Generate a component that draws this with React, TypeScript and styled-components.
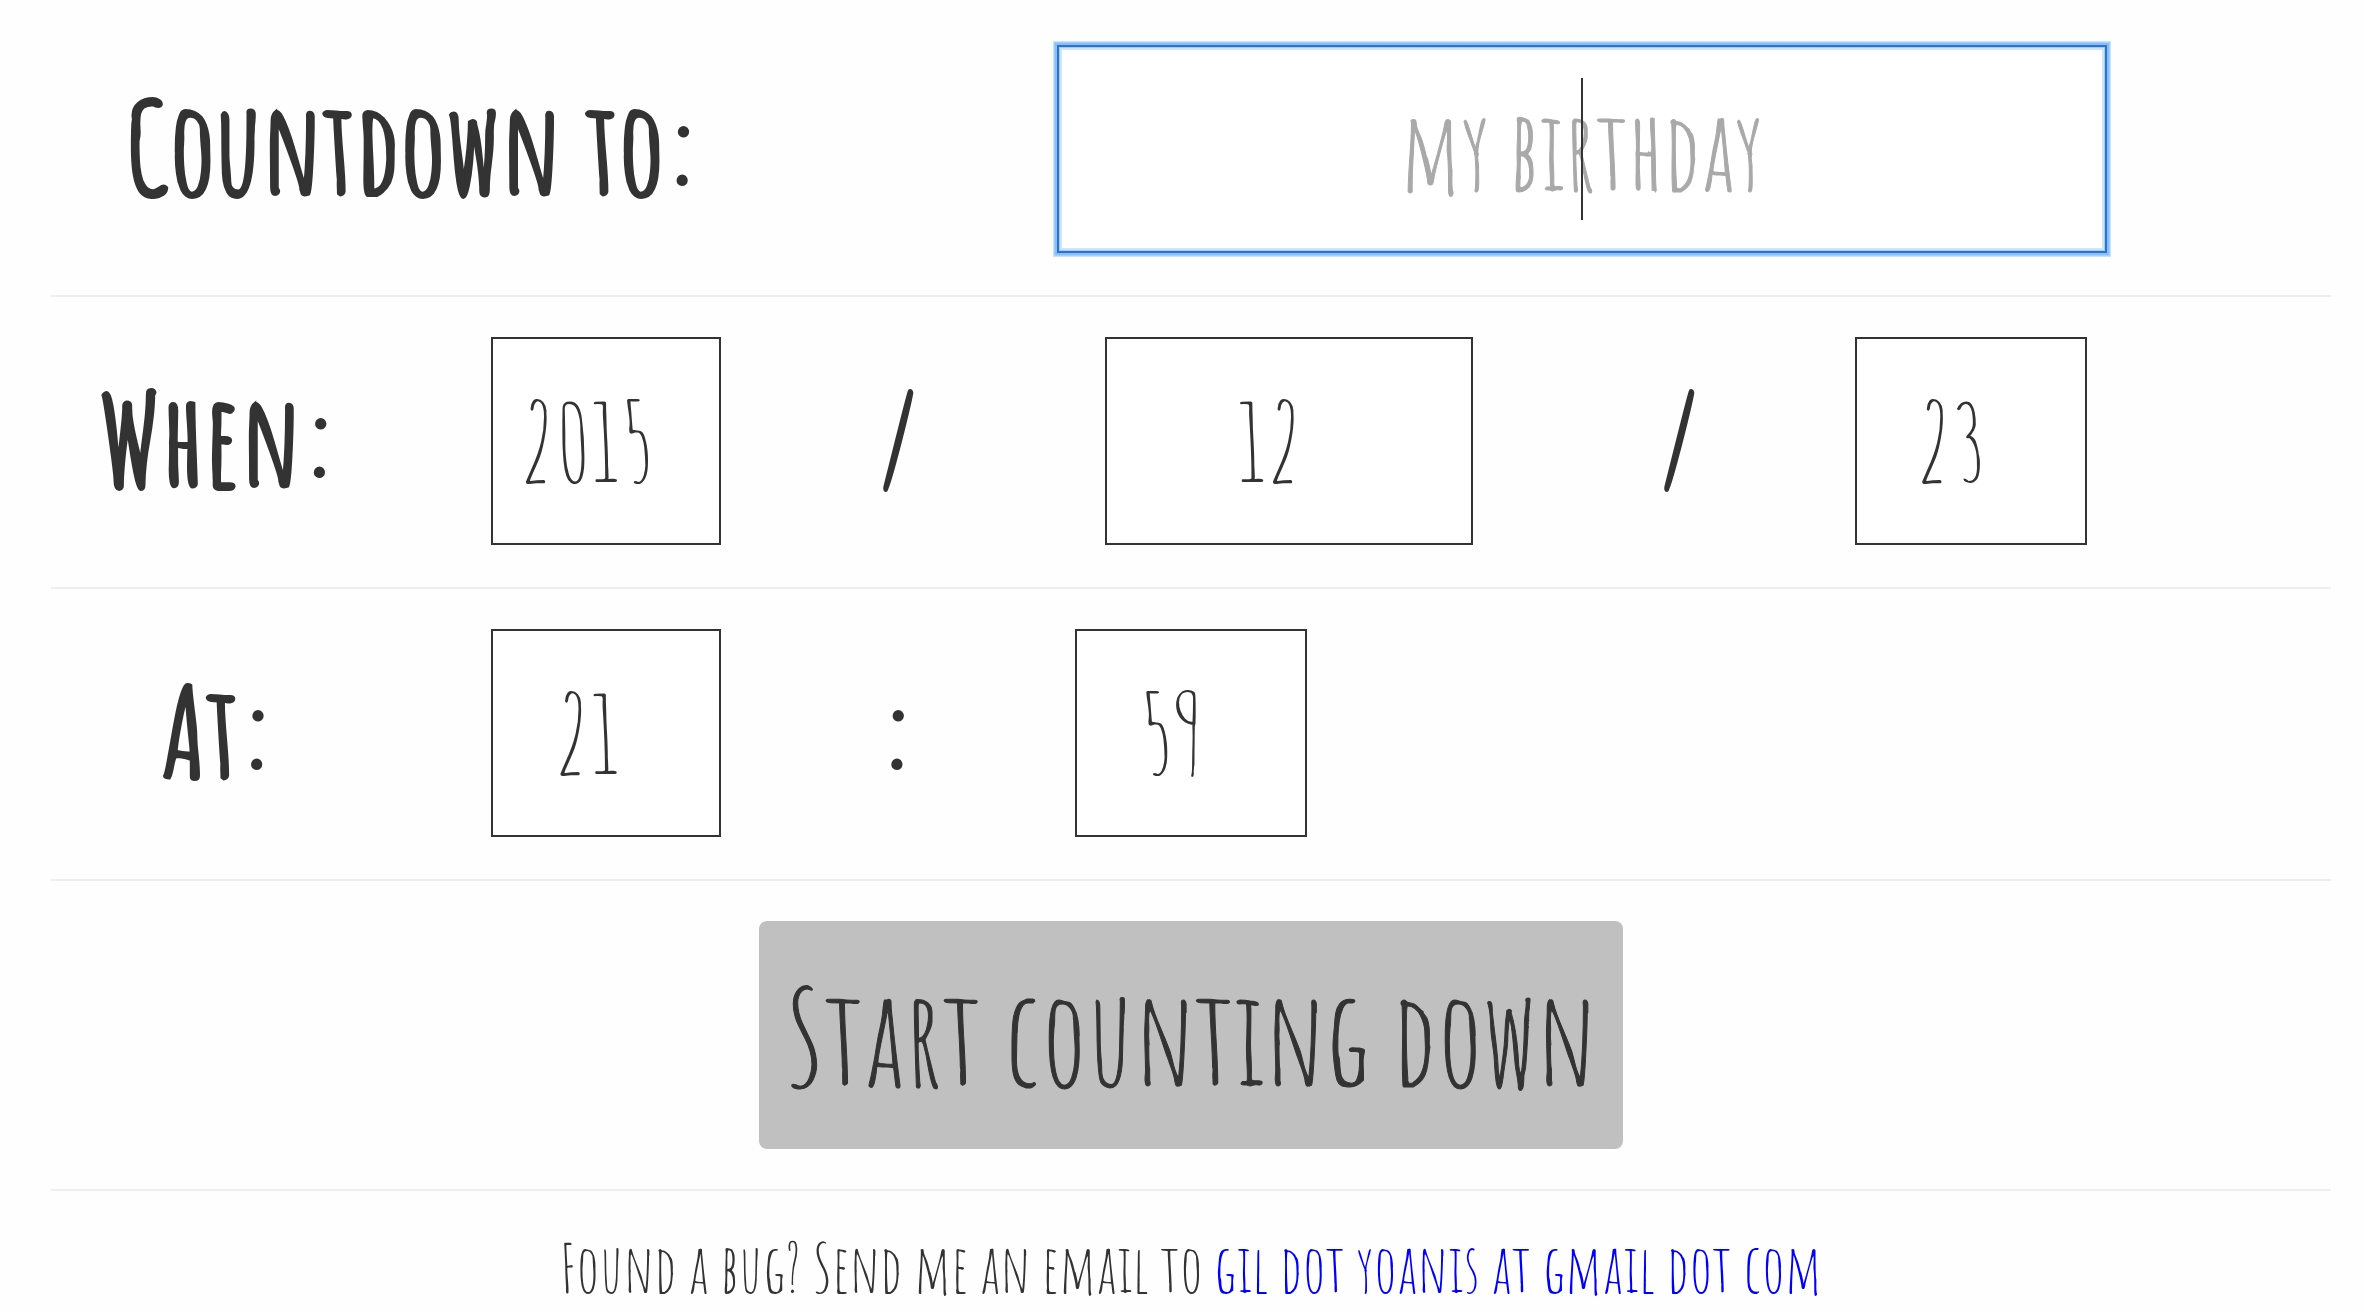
import React from 'react';
import styled, { createGlobalStyle, css } from 'styled-components';

const INK = '#333333';
const FONT = "'Amatic SC', 'Roboto Condensed', sans-serif";

const GlobalStyle = createGlobalStyle`
  *, *::before, *::after { box-sizing: border-box; }
  body {
    margin: 0;
    background: #fefefe;
    color: ${INK};
    font-family: ${FONT};
  }
`;

const Page = styled.main`
  padding: 0 33px 0 51px;
`;

const NameRow = styled.div`
  display: grid;
  grid-template-columns: 726fr 280fr 1050fr 224fr;
  align-items: center;
  padding: 45px 0 42px;
  border-bottom: 2px solid #eeeeee;
`;

const FieldRow = styled.div`
  display: grid;
  grid-template-columns: 336fr 104fr 230fr 354fr 428fr 352fr 232fr 244fr;
  align-items: center;
  padding: 40px 0 42px;
  border-bottom: 2px solid #eeeeee;
`;

const labelStyle = css`
  font-size: 128px;
  line-height: 160px;
  padding-bottom: 4px;
  font-weight: 700;
  text-align: center;
  white-space: nowrap;
  -webkit-text-stroke: 2px ${INK};
`;

const Label = styled.label`
  ${labelStyle}
`;

const Separator = styled.span<{ $column: number }>`
  ${labelStyle}
  grid-column: ${(p) => p.$column};
`;

const fieldStyle = css`
  width: 100%;
  height: 208px;
  margin: 0;
  border: 2px solid ${INK};
  border-radius: 0;
  background: #ffffff;
  color: ${INK};
  font-family: ${FONT};
  font-size: 108px;
  font-weight: 400;
  text-align: center;
  outline: none;
`;

const NameCell = styled.div`
  grid-column: 3;
  position: relative;
`;

const NameInput = styled.input`
  ${fieldStyle}
  display: block;
  padding: 0;
  border-color: #3473b7;
  caret-color: transparent;
  box-shadow: 0 0 0 2px #84bfff, 0 0 0 3px #a2cfff, 0 0 0 4px #c9e3ff, inset 0 0 0 1px #9bcbff, inset 0 0 0 3px #cde5ff;
  &::placeholder { color: #a9a9a9; opacity: 1; -webkit-text-stroke: 1px #a9a9a9; }
`;

const Caret = styled.span`
  position: absolute;
  top: 50%;
  left: 50%;
  width: 2px;
  height: 142px;
  transform: translate(-50%, -50%);
  background: ${INK};
  pointer-events: none;
`;

const NumberInput = styled.input<{ $column: number; $width?: number }>`
  ${fieldStyle}
  grid-column: ${(p) => p.$column};
  justify-self: center;
  max-width: ${(p) => p.$width ?? 232}px;
  padding: 0 38px 0 0;
  appearance: textfield;
  &::-webkit-inner-spin-button { appearance: none; margin: 0; }
`;

const MinuteCell = styled.div`
  grid-column: 5;
  display: flex;
`;

const ActionRow = styled.div`
  display: flex;
  justify-content: center;
  padding: 40px 0;
  border-bottom: 2px solid #eeeeee;
`;

const StartButton = styled.button`
  height: 228px;
  padding: 0 26px;
  border: 0;
  border-radius: 8px;
  background: #c0c0c0;
  color: ${INK};
  font-family: ${FONT};
  font-size: 131px;
  font-weight: 400;
  white-space: nowrap;
  -webkit-text-stroke: 1px ${INK};
`;

const Footer = styled.footer`
  padding: 32px 0 0;
  font-size: 66px;
  line-height: 90px;
  text-align: center;
`;

const MailLink = styled.a`
  color: #0000ff;
  text-decoration: none;
`;

export default function App() {
  return (
    <>
      <GlobalStyle />
      <Page>
        <form onSubmit={(e) => e.preventDefault()}>
          <NameRow>
            <Label htmlFor="name">Countdown to:</Label>
            <NameCell>
              <NameInput id="name" type="text" placeholder="my birthday" />
              <Caret />
            </NameCell>
          </NameRow>
          <FieldRow>
            <Label htmlFor="year">When:</Label>
            <NumberInput id="year" type="number" $column={3} defaultValue={2015} />
            <Separator $column={4}>/</Separator>
            <NumberInput aria-label="Month" type="number" $column={5} $width={368} defaultValue={12} />
            <Separator $column={6}>/</Separator>
            <NumberInput aria-label="Day" type="number" $column={7} defaultValue={23} />
          </FieldRow>
          <FieldRow>
            <Label htmlFor="hour">At:</Label>
            <NumberInput id="hour" type="number" $column={3} defaultValue={21} />
            <Separator $column={4}>:</Separator>
            <MinuteCell>
              <NumberInput aria-label="Minute" type="number" $column={1} defaultValue={59} />
            </MinuteCell>
          </FieldRow>
          <ActionRow>
            <StartButton type="submit">Start counting down</StartButton>
          </ActionRow>
        </form>
        <Footer>
          Found a bug? Send me an email to{' '}
          <MailLink href="mailto:gil.yoanis@gmail.com">gil dot yoanis at gmail dot com</MailLink>
        </Footer>
      </Page>
    </>
  );
}
